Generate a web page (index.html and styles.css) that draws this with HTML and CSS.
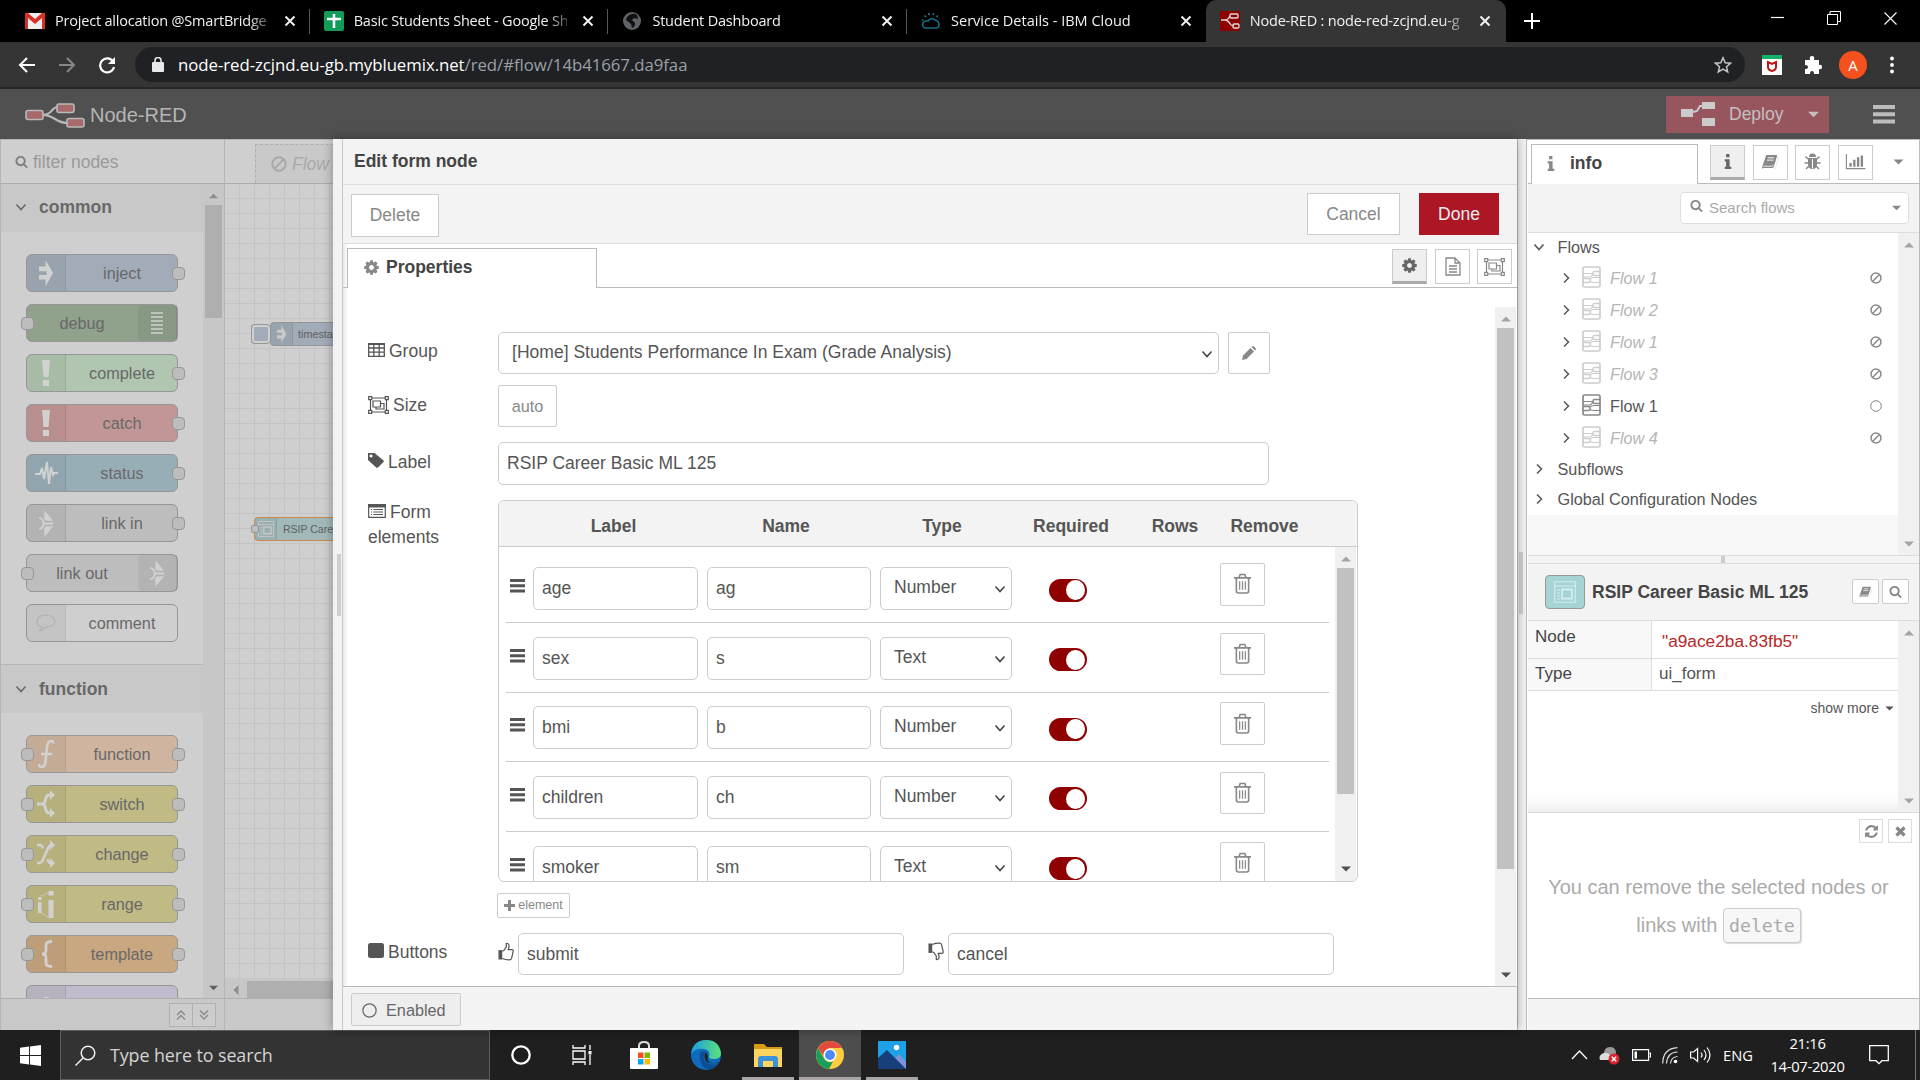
FILE: index.html
```html
<!DOCTYPE html>
<html lang="en">
<head>
<meta charset="utf-8">
<title>Node-RED : node-red-zcjnd.eu-gb.mybluemix.net</title>
<link rel="stylesheet" href="styles.css">
</head>
<body>
<svg class="defs" width="0" height="0">
  <symbol id="close" viewBox="0 0 12 12"><path d="M1.500 1.500l9 9M10.500 1.500l-9 9" stroke="currentColor" stroke-width="2" fill="none"/></symbol>
  <symbol id="cog" viewBox="0 0 1792 1792"><path fill="currentColor" d="M1152 896q0-106-75-181t-181-75-181 75-75 181 75 181 181 75 181-75 75-181zm512-109v222q0 12-8 23t-20 13l-185 28q-19 54-39 91 35 50 107 138 10 12 10 25t-9 23q-27 37-99 108t-94 71q-12 0-26-9l-138-108q-44 23-91 38-16 136-29 186-7 28-36 28h-222q-14 0-24.500-8.500t-11.500-21.500l-28-184q-49-16-90-37l-141 107q-10 9-25 9-14 0-25-11-126-114-165-168-7-10-7-23 0-12 8-23 15-21 51-66.500t54-70.500q-27-50-41-99l-183-27q-13-2-21-12.500t-8-23.500v-222q0-12 8-23t19-13l186-28q14-46 39-92-40-57-107-138-10-12-10-24 0-10 9-23 26-36 98.500-107.500t94.500-71.500q13 0 26 10l138 107q44-23 91-38 16-136 29-186 7-28 36-28h222q14 0 24.500 8.500t11.500 21.500l28 184q49 16 90 37l142-107q9-9 24-9 13 0 25 10 129 119 165 170 7 8 7 22 0 12-8 23-15 21-51 66.500t-54 70.500q26 50 41 98l183 28q13 2 21 12.500t8 23.500z"/></symbol>
  <symbol id="search" viewBox="0 0 1792 1792"><path fill="currentColor" d="M1216 832q0-185-131.500-316.500t-316.500-131.500-316.500 131.500-131.500 316.500 131.500 316.500 316.500 131.500 316.500-131.500 131.500-316.500zm512 832q0 52-38 90t-90 38q-54 0-90-38l-343-342q-179 124-399 124-143 0-273.500-55.500t-225-150-150-225-55.500-273.500 55.500-273.500 150-225 225-150 273.500-55.500 273.500 55.500 225 150 150 225 55.500 273.500q0 220-124 399l343 343q37 37 37 90z"/></symbol>
  <symbol id="refresh" viewBox="0 0 1792 1792"><path fill="currentColor" d="M1639 1056q0 5-1 7-64 268-268 434.500t-478 166.500q-146 0-282.500-55t-243.500-157l-129 129q-19 19-45 19t-45-19-19-45v-448q0-26 19-45t45-19h448q26 0 45 19t19 45-19 45l-137 137q71 66 161 102t187 36q134 0 250-65t186-179q11-17 53-117 8-23 30-23h192q13 0 22.500 9.500t9.500 22.500zm25-800v448q0 26-19 45t-45 19h-448q-26 0-45-19t-19-45 19-45l138-138q-148-137-349-137-134 0-250 65t-186 179q-11 17-53 117-8 23-30 23h-199q-13 0-22.500-9.500t-9.500-22.500v-7q65-268 270-434.500t480-166.500q146 0 284 55.500t245 156.500l130-129q19-19 45-19t45 19 19 45z"/></symbol>
  <symbol id="chev-d" viewBox="0 0 12 12"><path d="M1.500 3.500L6 8.500l4.500-5" stroke="currentColor" stroke-width="1.600" fill="none"/></symbol>
  <symbol id="chev-r" viewBox="0 0 12 12"><path d="M4 1.500L8.500 6 4 10.500" stroke="currentColor" stroke-width="1.500" fill="none"/></symbol>
  <symbol id="up" viewBox="0 0 10 6"><path fill="currentColor" d="M0 5.500h10L5 .5z"/></symbol>
  <symbol id="down" viewBox="0 0 10 6"><path fill="currentColor" d="M0 .5h10L5 5.500z"/></symbol>
  <symbol id="bars" viewBox="0 0 15 14"><path fill="currentColor" d="M0 0h15v3H0zM0 5.300h15v3H0zM0 10.600h15v3H0z"/></symbol>
  <symbol id="trash" viewBox="0 0 18 22"><g fill="none" stroke="currentColor" stroke-width="1.700"><path d="M0 5h18M5.500 4.500l1-3h5l1 3M2.500 5v14q0 2 2 2h9q2 0 2-2V5"/><path d="M6 8.500v9M9 8.500v9M12 8.500v9" stroke-width="1.300"/></g></symbol>
  <symbol id="group" viewBox="0 0 21 18"><g fill="none" stroke="currentColor"><path stroke-width="1.200" d="M2.500 2h16v14h-16zM5 5h7.500v6H5zM12.500 7.500H16V13H8v-2"/><g fill="#fff" stroke-width="1.200"><path d="M.7.700h3v3h-3zM17.300.7h3v3h-3zM.7 14.300h3v3h-3zM17.300 14.300h3v3h-3z"/></g></g></symbol>
  <symbol id="flow" viewBox="0 0 19 22"><g fill="none" stroke="currentColor"><rect x="1" y="1" width="17" height="20" rx="1.500" stroke-width="1.700"/><path stroke-width="1.100" d="M1 7.500h10M8 15.200q2 1.300 4 1.300h6M8 13.500q1-2 4-2h6M11 7.500q-1 3-3 3.500H1"/><path d="M18 5.500h-5.500q-1.500 0-1.500 2t1.500 2H18M1 12.500h5.500q1.500 0 1.500 2t-1.500 2H1" stroke-width="1.400"/></g></symbol>
  <symbol id="ban" viewBox="0 0 12 12"><g fill="none" stroke="currentColor" stroke-width="1.500"><circle cx="6" cy="6" r="5"/><path d="M2.500 9.500l7-7"/></g></symbol>
  <symbol id="ring" viewBox="0 0 12 12"><circle cx="6" cy="6" r="5.300" fill="none" stroke="currentColor" stroke-width="1"/></symbol>
  <symbol id="book" viewBox="0 0 18 17"><path fill="currentColor" d="M5 1h10.500q1.500 0 1 1.500L13 13.500q-.4 1.500-2 1.500H2q-1 0-.7 1H13q1.500 0 2-1.500L18 4.500q.2 0 0-.8L14.500 16H2Q0 16 .7 13.500z"/><path stroke="#fff" d="M6.500 4h7M5.800 6.500h7" stroke-width="1"/><path fill="none" stroke="#fff" d="M2 13h9q1 0 1.500-1.500" stroke-width=".9"/></symbol>
  <symbol id="bug" viewBox="0 0 17 18"><g fill="currentColor"><path d="M5 4a3.500 3.500 0 0 1 7 0zM4 5h9v6q0 5-4.500 5T4 11z"/></g><path fill="none" stroke="currentColor" stroke-width="1.500" d="M4 6L1.500 3.500M13 6l2.500-2.500M4 10H.5M13 10h3.500M5 13l-3 3M12 13l3 3"/><path stroke="#fff" stroke-width="1" d="M8.500 6v9.500"/></symbol>
  <symbol id="chart" viewBox="0 0 21 17"><path fill="none" stroke="currentColor" stroke-width="1.200" d="M.8 0v15.600H21"/><path fill="currentColor" d="M4 9.500h2.500v4H4zM8 6h2.500v7.500H8zM12 3.500h2.500v10H12zM16 1.500h2.500v12H16z"/></symbol>
  <symbol id="info" viewBox="0 0 8 16"><path fill="currentColor" d="M2 0h3.500v3.500H2zM.5 5.500h5.200v8H7.500V16H.5v-2.500H2V8H.5z"/></symbol>
  <symbol id="thumb" viewBox="0 0 17 20"><path fill="none" stroke="currentColor" stroke-width="1.300" stroke-linejoin="round" d="M4.500 9.500q2 0 3-2.500l1.300-2V1.500q2.700-.5 3 2.500 0 2-1 4h4q1.700.3 1.200 2.500l-1.500 6.500q-.5 2-2.500 2-4.500 0-7.500-1.500"/><path fill="currentColor" d="M.5 8.500h4v10h-4z"/></symbol>
  <symbol id="form" viewBox="0 0 22 22"><g fill="none" stroke="currentColor" stroke-width="1.100"><path d="M.7.700h20.600v20.600H.7zM.7 5h20.600"/><path stroke-width="1.800" d="M8 8.500h10v9H8z"/><path d="M3 9h3M3 12h3M3 15h3M3 18h3"/></g></symbol>
  <symbol id="arrow" viewBox="0 0 16 28"><path fill="currentColor" d="M0 7h7V0l8 14-8 14v-7H0v-5h8v-4H0z"/></symbol>
  <symbol id="link" viewBox="0 0 16 28"><path fill="currentColor" d="M6 0l9 11H9Q6 11 5.500 8zM6 28l9-11H9q-3 0-3.500 3z"/><path d="M0 8q5 1 5 6t-5 6M5 14h10" fill="none" stroke="currentColor" stroke-width="2"/></symbol>
  <symbol id="win" viewBox="0 0 22 22"><path fill="#fff" d="M0 3l9.500-1.300v8.800H0zM10.500 1.500L22 0v10.500H10.500zM0 11.500h9.500v8.800L0 19zM10.500 11.500H22V22l-11.500-1.500z"/></symbol>
</svg>

<header class="tabs">
  <div class="tab"><svg class="fav" viewBox="0 0 20 16"><path fill="#eee" d="M0 0h20v16H0z"/><path fill="#d93025" d="M0 0h3l7 6 7-6h3v16h-3V5l-7 6-7-6v11H0z"/></svg><span class="tt">Project allocation @SmartBridge</span><svg class="x"><use href="#close"/></svg></div>
  <div class="tab"><svg class="fav" viewBox="0 0 20 20"><rect width="20" height="20" rx="2" fill="#0f9d58"/><path stroke="#fff" stroke-width="2.500" d="M10 3v14M3 8h14"/></svg><span class="tt">Basic Students Sheet - Google Sh</span><svg class="x"><use href="#close"/></svg></div>
  <div class="tab"><svg class="fav" viewBox="0 0 20 20"><circle cx="10" cy="10" r="9" fill="#5f6368"/><path fill="#111" d="M10 3q6-1 6 5l-4-1-2 2 3 3q1 3-3 5l-1-4-5-4q1-5 6-6z"/></svg><span class="tt">Student Dashboard</span><svg class="x"><use href="#close"/></svg></div>
  <div class="tab"><svg class="fav" viewBox="0 0 20 20"><g fill="none" stroke-width="1.600"><path stroke="#176b87" d="M4 17q-3-1-2-5 2-3 5-2 3-4 7-1 4 1 4 5 0 3-3 3z"/><path stroke="#137a94" d="M5 6L3.500 4.500M8 4V2M12 4l.7-2M15.500 6L17 4.500M2.500 9H1"/></g></svg><span class="tt wide">Service Details - IBM Cloud</span><svg class="x"><use href="#close"/></svg></div>
  <div class="tab active"><svg class="fav" viewBox="0 0 20 20"><rect width="20" height="20" rx="1" fill="#8f0000"/><g fill="none" stroke="#ddd" stroke-width="1.300"><path d="M1 9h4q3 0 5-4M5 9q3 0 6 5l3 1"/><rect x="10" y="3" width="8" height="4" rx="1"/><rect x="13" y="13" width="6" height="4" rx="1"/></g></svg><span class="tt">Node-RED : node-red-zcjnd.eu-g</span><svg class="x"><use href="#close"/></svg></div>
  <svg class="plus" viewBox="0 0 16 16"><path d="M8 0v16M0 8h16" stroke="#fff" stroke-width="2"/></svg>
  <div class="winbtns">
    <svg width="13" height="14" viewBox="0 0 13 14"><path d="M0 6.500h13" stroke="#fff" stroke-width="1.200"/></svg>
    <svg width="14" height="14" viewBox="0 0 14 14"><path d="M.5 3.500h10v10H.5zM3 3.500v-3h10.500v10H11" stroke="#fff" fill="none"/></svg>
    <svg width="13" height="13" viewBox="0 0 13 13"><path d="M.5.500l12 12M12.500.500l-12 12" stroke="#fff" stroke-width="1.100"/></svg>
  </div>
</header>

<div class="toolbar">
  <svg class="nav" viewBox="0 0 18 18"><path d="M17 9H2M9 2L2 9l7 7" stroke="#fff" stroke-width="2" fill="none"/></svg>
  <svg class="nav" viewBox="0 0 18 18"><path d="M1 9h15M9 2l7 7-7 7" stroke="#85878a" stroke-width="2" fill="none"/></svg>
  <svg class="nav" viewBox="0 0 18 18"><path d="M15 5.500A7 7 0 1 0 16 11" stroke="#fff" stroke-width="2.200" fill="none"/><path d="M17 1v7h-7z" fill="#fff"/></svg>
  <div class="omni">
    <svg class="lock" viewBox="0 0 12 15"><rect y="5" width="12" height="10" rx="1" fill="#e8eaed"/><path d="M3 6V3.500a3 3 0 0 1 6 0V6" stroke="#e8eaed" stroke-width="1.600" fill="none"/></svg>
    <span class="url"><b>node-red-zcjnd.eu-gb.mybluemix.net</b>/red/#flow/14b41667.da9faa</span>
    <svg class="star" viewBox="0 0 18 18"><path d="M9 1.800l2.200 4.900 5.300.5-4 3.500 1.200 5.200L9 13.100l-4.700 2.800 1.200-5.200-4-3.500 5.300-.5z" stroke="#c4c7c5" stroke-width="1.500" fill="none"/></svg>
  </div>
  <svg class="ext" viewBox="0 0 20 20"><rect width="20" height="20" fill="#fff"/><rect width="20" height="4" fill="#13b36a"/><path d="M6 7v5q0 3 4 4 4-1 4-4V7l-4 2z" stroke="#c01818" stroke-width="2" fill="none"/></svg>
  <svg class="ext puzzle" viewBox="0 0 20 20"><path fill="#fff" d="M2 5h5q-1-4 2-4t2 4h5v5q3-1 3 2t-3 2v5h-5q0-3-2-3t-2 3H2v-5q3 0 3-2t-3-2z"/></svg>
  <span class="avatar">A</span>
  <svg class="dots" viewBox="0 0 4 18"><circle cx="2" cy="2.500" r="1.900" fill="#fff"/><circle cx="2" cy="9" r="1.900" fill="#fff"/><circle cx="2" cy="15.500" r="1.900" fill="#fff"/></svg>
</div>

<div class="redhead">
  <svg class="logo" viewBox="0 0 60 25"><path d="M17 12c12 0 8-8 16-8M17 12c14 0 12 8 26 8" stroke="#b9b9b9" stroke-width="2.200" fill="none"/><g fill="#a76a6a" stroke="#b9b9b9" stroke-width="1.600"><rect x="1" y="7.500" width="17" height="9" rx="2"/><rect x="32" y="1" width="17" height="8.500" rx="2"/><rect x="42" y="15.500" width="17" height="8.500" rx="2"/></g></svg>
  <span class="brand">Node-RED</span>
  <div class="deploy"><svg width="34" height="24" viewBox="0 0 34 24"><path fill="#cbcbcb" d="M0 7h12v8H0zM21 0h13v7H21zM21 16h13v8H21z"/><path d="M12 10l4-1 3-5h3" stroke="#cbcbcb" stroke-width="2" fill="none"/></svg><span>Deploy</span><svg class="dcaret"><use href="#down"/></svg></div>
  <svg class="menu" viewBox="0 0 22 19"><path fill="#bcbcbc" d="M0 0h22v4H0zM0 7.200h22v4H0zM0 14.400h22v4H0z"/></svg>
</div>

<main class="work">
  <aside class="palette">
    <div class="pfilter"><svg width="13" height="13"><use href="#search"/></svg><span>filter nodes</span></div>
    <div class="pbody">
      <div class="plist">
        <h3><svg width="12" height="12"><use href="#chev-d"/></svg>common</h3>
        <div class="nodes">
          <div class="node inject"><i><svg width="15" height="28"><use href="#arrow"/></svg></i><span>inject</span><b class="port r"></b></div>
          <div class="node debug rev"><i><svg width="12" height="22" viewBox="0 0 12 22"><path stroke="currentColor" stroke-width="1.500" d="M0 1h12M0 5h12M0 9h12M0 13h12M0 17h12M0 21h12"/></svg></i><span>debug</span><b class="port l"></b></div>
          <div class="node complete"><i><svg width="8" height="26" viewBox="0 0 8 26"><path fill="currentColor" d="M0 0h8L6.500 17h-5zM1 20h6v6H1z"/></svg></i><span>complete</span><b class="port r"></b></div>
          <div class="node catch"><i><svg width="8" height="26" viewBox="0 0 8 26"><path fill="currentColor" d="M0 0h8L6.500 17h-5zM1 20h6v6H1z"/></svg></i><span>catch</span><b class="port r"></b></div>
          <div class="node status"><i><svg width="23" height="28" viewBox="0 0 23 28"><path fill="none" stroke="currentColor" stroke-width="2" d="M0 15h5l2-6 2 11L12 3l2 22 2-17 2 8 1-2h4"/></svg></i><span>status</span><b class="port r"></b></div>
          <div class="node link"><i><svg width="15" height="27"><use href="#link"/></svg></i><span>link in</span><b class="port r"></b></div>
          <div class="node link rev"><i><svg width="15" height="27"><use href="#link"/></svg></i><span>link out</span><b class="port l"></b></div>
          <div class="node comment"><i><svg width="20" height="18" viewBox="0 0 20 18"><path fill="none" stroke="#b4b4b4" stroke-width="1.400" d="M6 13Q1 12 1 7.500 2 1 10 1t9 6q-1 6-9 6-3 3-7 4 3-2 3-4z"/></svg></i><span>comment</span></div>
        </div>
        <h3 class="second"><svg width="12" height="12"><use href="#chev-d"/></svg>function</h3>
        <div class="nodes">
          <div class="node function"><i><svg width="16" height="28" viewBox="0 0 16 28"><path fill="none" stroke="currentColor" stroke-width="2.600" d="M16 4q0-3-3-3-3 0-4 6L7.500 21q-.5 6-4 6Q1 27 1 24M3 14h11"/></svg></i><span>function</span><b class="port l"></b><b class="port r"></b></div>
          <div class="node yellow"><i><svg width="18" height="28" viewBox="0 0 18 28"><path fill="none" stroke="currentColor" stroke-width="3" d="M0 14h6.500M15 5h-3q-2.500 0-3.500 4.500T6.500 14q1 0 2 4.500T12 23h3"/><path fill="currentColor" d="M13 0l5 5-5 5zM13 18l5 5-5 5z"/></svg></i><span>switch</span><b class="port l"></b><b class="port r"></b></div>
          <div class="node yellow"><i><svg width="18" height="28" viewBox="0 0 18 28"><path fill="none" stroke="currentColor" stroke-width="2.600" d="M0 5h3q2 0 3 3.500M10.500 19q1 4 3 4H15M0 23h2q3 0 4-3.500l5-11Q12 5 15 5"/><path fill="currentColor" d="M13 0l5 5-5 5zM13 18l5 5-5 5z"/></svg></i><span>change</span><b class="port l"></b><b class="port r"></b></div>
          <div class="node yellow"><i><svg width="16" height="27" viewBox="0 0 16 27"><path fill="currentColor" d="M0 6h3.500v3H0zM0 11h3.500v11H0zM10.500 0h5v4.500h-5zM10.500 9h5v18h-5z"/><path stroke="currentColor" stroke-dasharray="2 1" d="M3 5l7-3M3 22l7 4"/></svg></i><span>range</span><b class="port l"></b><b class="port r"></b></div>
          <div class="node template"><i><svg width="12" height="28" viewBox="0 0 12 28"><path fill="none" stroke="currentColor" stroke-width="2.800" d="M12 1.500Q6 1.500 6 5v5q0 4-4 4 4 0 4 4v5q0 3.500 6 3.500"/></svg></i><span>template</span><b class="port l"></b><b class="port r"></b></div>
          <div class="node delay"><i><svg width="22" height="22" viewBox="0 0 22 22"><circle cx="11" cy="14" r="9" fill="none" stroke="currentColor" stroke-width="2.500" stroke-dasharray="5 3"/></svg></i><span></span></div>
        </div>
      </div>
      <div class="psb"><svg><use href="#up"/></svg><div class="pthumb"></div><svg class="dn"><use href="#down"/></svg></div>
    </div>
    <div class="pfoot"><div class="pbtn"><svg width="10" height="10" viewBox="0 0 10 10"><path d="M1 5l4-4 4 4M1 9.500l4-4 4 4"/></svg></div><div class="pbtn"><svg width="10" height="10" viewBox="0 0 10 10"><path d="M1 .5l4 4 4-4M1 5l4 4 4-4"/></svg></div></div>
  </aside>

  <section class="canvas">
    <div class="ctabs"><div class="ctab"><svg width="16" height="16"><use href="#ban"/></svg><span>Flow 1</span></div></div>
    <div class="grid">
      <div class="cnode c1"><i><svg width="10" height="18"><use href="#arrow"/></svg></i>timestamp</div><div class="trig"></div>
      <div class="cnode c2"><i><svg width="16" height="16"><use href="#form"/></svg></i>RSIP Career</div><div class="cport"></div>
    </div>
    <div class="hsb"><svg viewBox="0 0 6 10"><path fill="#8d8d8d" d="M5.500 0v10L.5 5z"/></svg><div></div></div>
    <div class="cfoot"></div>
  </section>

  <section class="tray">
    <div class="trayedge"><div class="grip"></div></div>
    <div class="traymain">
      <div class="thead">Edit form node</div>
      <div class="tbar"><span class="btn del">Delete</span><span class="btn cancel">Cancel</span><span class="btn done">Done</span></div>
      <div class="ttabs"><div class="edge"></div><div class="ptab"><svg width="17" height="17"><use href="#cog"/></svg>Properties</div>
        <div class="ticons"><span class="ib on"><svg width="17" height="17"><use href="#cog"/></svg></span><span class="ib"><svg width="16" height="19" viewBox="0 0 16 19"><path d="M1 1h9l5 5v12H1zM10 1v5h5M4 9h8M4 12h8M4 15h8" fill="none" stroke="currentColor" stroke-width="1.300"/></svg></span><span class="ib"><svg width="21" height="18"><use href="#group"/></svg></span></div></div>
      <div class="tbody">
        <div class="form">
          <div class="frow f1"><label><svg width="17" height="14" viewBox="0 0 17 14"><path d="M.7.700h15.600v12.600H.7zM.7 5h15.600M.7 9.200h15.600M5.800 1v12M11.200 1v12" fill="none" stroke="currentColor" stroke-width="1.300"/><path d="M0 0h17v2H0z" fill="currentColor"/></svg>Group</label><div class="inp gsel">[Home] Students Performance In Exam (Grade Analysis)<svg width="12" height="12"><use href="#chev-d"/></svg></div><span class="btn pencil"><svg width="14" height="14" viewBox="0 0 14 14"><path fill="currentColor" d="M0 14l1-4.500 7.500-7.500L12 5.500 4.500 13zM9.500 1q1.300-1.500 2.500-.5l1.500 1.500q1 1-.5 2.500z"/></svg></span></div>
          <div class="frow f2"><label><svg width="21" height="18"><use href="#group"/></svg>Size</label><span class="btn auto">auto</span></div>
          <div class="frow f3"><label><svg width="16" height="15" viewBox="0 0 16 15"><path fill="currentColor" fill-rule="evenodd" d="M0 0h6.500l9 7.500q.7.700 0 1.500L10 14.500q-1 .7-1.800 0L0 7zM3 1.500a1.500 1.500 0 1 0 .1 0z"/></svg>Label</label><div class="inp lab">RSIP Career Basic ML 125</div></div>
          <div class="frow f4"><label><svg width="18" height="14" viewBox="0 0 18 14"><path d="M.7.700h16.600v12.600H.7zM5.500 5.500H15M5.500 8H15M5.500 10.500H15M3 5.500h1.200M3 8h1.200M3 10.500h1.200" fill="none" stroke="currentColor" stroke-width="1.200"/><path d="M0 0h18v3.500H0z" fill="currentColor"/></svg>Form<br>elements</label>
            <div class="list">
              <div class="lhead"><span class="h1">Label</span><span class="h2">Name</span><span class="h3">Type</span><span class="h4">Required</span><span class="h5">Rows</span><span class="h6">Remove</span></div>
              <div class="lbody"><div class="rows">
                <div class="row"><svg class="drag"><use href="#bars"/></svg><div class="inp a">age</div><div class="inp n">ag</div><div class="inp t">Number<svg width="12" height="12"><use href="#chev-d"/></svg></div><div class="tog"></div><span class="btn rm"><svg><use href="#trash"/></svg></span></div>
                <div class="row"><svg class="drag"><use href="#bars"/></svg><div class="inp a">sex</div><div class="inp n">s</div><div class="inp t">Text<svg width="12" height="12"><use href="#chev-d"/></svg></div><div class="tog"></div><span class="btn rm"><svg><use href="#trash"/></svg></span></div>
                <div class="row"><svg class="drag"><use href="#bars"/></svg><div class="inp a">bmi</div><div class="inp n">b</div><div class="inp t">Number<svg width="12" height="12"><use href="#chev-d"/></svg></div><div class="tog"></div><span class="btn rm"><svg><use href="#trash"/></svg></span></div>
                <div class="row"><svg class="drag"><use href="#bars"/></svg><div class="inp a">children</div><div class="inp n">ch</div><div class="inp t">Number<svg width="12" height="12"><use href="#chev-d"/></svg></div><div class="tog"></div><span class="btn rm"><svg><use href="#trash"/></svg></span></div>
                <div class="row"><svg class="drag"><use href="#bars"/></svg><div class="inp a">smoker</div><div class="inp n">sm</div><div class="inp t">Text<svg width="12" height="12"><use href="#chev-d"/></svg></div><div class="tog"></div><span class="btn rm"><svg><use href="#trash"/></svg></span></div>
              </div><div class="sb lsb"><svg><use href="#up"/></svg><div></div><svg class="dn"><use href="#down"/></svg></div></div>
            </div></div>
          <div class="frow f5"><span class="btn add"><svg width="11" height="11" viewBox="0 0 11 11"><path d="M5.500 0v11M0 5.500h11" stroke="currentColor" stroke-width="3"/></svg>element</span></div>
          <div class="frow f6"><label><svg width="16" height="15" viewBox="0 0 16 15"><rect width="16" height="15" rx="2.500" fill="currentColor"/></svg>Buttons</label><svg class="th"><use href="#thumb"/></svg><div class="inp bt">submit</div><svg class="th flip"><use href="#thumb"/></svg><div class="inp bt">cancel</div></div>
        </div>
        <div class="sb tsb"><svg><use href="#up"/></svg><div></div><svg class="dn"><use href="#down"/></svg></div>
      </div>
      <div class="tfoot"><span class="btn en"><svg width="15" height="15"><use href="#ring"/></svg>Enabled</span></div>
    </div>
  </section>
  <div class="split"><div class="grip"></div></div>

  <aside class="side">
    <div class="stabs"><div class="edge"></div><div class="stab"><svg width="8" height="15"><use href="#info"/></svg>info</div>
      <span class="ib on"><svg width="8" height="15"><use href="#info"/></svg></span><span class="ib"><svg width="18" height="16"><use href="#book"/></svg></span><span class="ib"><svg width="17" height="18"><use href="#bug"/></svg></span><span class="ib"><svg width="21" height="16"><use href="#chart"/></svg></span><svg class="scaret"><use href="#down"/></svg></div>
    <div class="ssearch"><div class="sbox"><svg width="13" height="13"><use href="#search"/></svg><span>Search flows</span><svg class="sc"><use href="#down"/></svg></div></div>
    <div class="stree"><div class="tree">
      <div class="titems">
      <div class="ti top open"><svg class="cv"><use href="#chev-d"/></svg>Flows</div>
      <div class="ti fl off"><svg class="cv"><use href="#chev-r"/></svg><svg class="fi"><use href="#flow"/></svg><span>Flow 1</span><svg class="st"><use href="#ban"/></svg></div>
      <div class="ti fl off"><svg class="cv"><use href="#chev-r"/></svg><svg class="fi"><use href="#flow"/></svg><span>Flow 2</span><svg class="st"><use href="#ban"/></svg></div>
      <div class="ti fl off"><svg class="cv"><use href="#chev-r"/></svg><svg class="fi"><use href="#flow"/></svg><span>Flow 1</span><svg class="st"><use href="#ban"/></svg></div>
      <div class="ti fl off"><svg class="cv"><use href="#chev-r"/></svg><svg class="fi"><use href="#flow"/></svg><span>Flow 3</span><svg class="st"><use href="#ban"/></svg></div>
      <div class="ti fl"><svg class="cv"><use href="#chev-r"/></svg><svg class="fi"><use href="#flow"/></svg><span>Flow 1</span><svg class="st"><use href="#ring"/></svg></div>
      <div class="ti fl off"><svg class="cv"><use href="#chev-r"/></svg><svg class="fi"><use href="#flow"/></svg><span>Flow 4</span><svg class="st"><use href="#ban"/></svg></div>
      <div class="ti top"><svg class="cv"><use href="#chev-r"/></svg>Subflows</div>
      <div class="ti top"><svg class="cv"><use href="#chev-r"/></svg>Global Configuration Nodes</div>
      </div></div>
      <div class="sb off"><svg><use href="#up"/></svg><svg class="dn"><use href="#down"/></svg></div></div>
    <div class="hsplit"><div></div></div>
    <div class="nhead"><span class="nicon"><svg width="22" height="22"><use href="#form"/></svg></span><span class="ntitle">RSIP Career Basic ML 125</span><span class="nb"><svg width="13" height="12"><use href="#book"/></svg></span><span class="nb"><svg width="13" height="13"><use href="#search"/></svg></span></div>
    <div class="nbody"><div class="ntab">
      <div class="nr"><span>Node</span><em class="id">"a9ace2ba.83fb5"</em></div>
      <div class="nr r2"><span>Type</span><em>ui_form</em></div>
      <div class="more">show more<svg><use href="#down"/></svg></div></div>
      <div class="sb off"><svg><use href="#up"/></svg><svg class="dn"><use href="#down"/></svg></div></div>
    <div class="tips"><div class="tipbtns"><span><svg width="15" height="15"><use href="#refresh"/></svg></span><span><svg width="11" height="11" viewBox="0 0 11 11"><path d="M1.500 1.500l8 8M9.500 1.500l-8 8" stroke="currentColor" stroke-width="3.200"/></svg></span></div>
      <p>You can remove the selected nodes or<br>links with <kbd>delete</kbd></p></div>
    <div class="sfoot"></div>
  </aside>
</main>

<footer class="task">
  <div class="start"><svg width="21" height="21"><use href="#win"/></svg></div>
  <div class="tsearch"><svg width="21" height="21" viewBox="0 0 21 21"><circle cx="13" cy="8" r="6.800" fill="none" stroke="#eee" stroke-width="1.500"/><path d="M8 13l-7.500 7.500" stroke="#eee" stroke-width="1.500"/></svg><span>Type here to search</span></div>
  <div class="app first"><svg width="20" height="20" viewBox="0 0 20 20"><circle cx="10" cy="10" r="8.700" fill="none" stroke="#fff" stroke-width="2.300"/></svg></div>
  <div class="app"><svg width="21" height="20" viewBox="0 0 21 20"><path d="M1 0v3h12V0M1 20v-3h12v3M1 6h12v8H1zM18 0v5M18 10v10" fill="none" stroke="#fff" stroke-width="1.300"/><path fill="#fff" d="M16.500 6h3v3.500h-3z"/></svg></div>
  <div class="app"><svg width="30" height="30" viewBox="0 0 30 30"><path d="M10 10V6q0-4 5-4t5 4v4" fill="none" stroke="#ddd" stroke-width="2"/><rect x="1" y="8" width="28" height="21" rx="1" fill="#fff"/><path fill="#f25022" d="M9 12.500h5.500V18H9z"/><path fill="#7fba00" d="M15.500 12.500H21V18h-5.500z"/><path fill="#00a4ef" d="M9 19h5.500v5.500H9z"/><path fill="#ffb900" d="M15.500 19H21v5.500h-5.500z"/></svg></div>
  <div class="app"><svg width="30" height="30" viewBox="0 0 30 30"><defs><linearGradient id="eg"><stop offset="0" stop-color="#1b9de2"/><stop offset="1" stop-color="#5ce07c"/></linearGradient></defs><circle cx="15" cy="15" r="15" fill="#0f6cbd"/><path fill="url(#eg)" d="M0 14Q2 0 15 0t15 13q0 6-7 6-5 0-5-2 2-7-5-8Q4 8 0 14z"/><path fill="#222" d="M15 12q-3 4 0 9 4 4 13 1-2 2-6 1-7 0-5-7z"/><path fill="#0c4f94" d="M9 13q-2 12 8 17 7-1 11-7-8 4-14-2-3-4 1-9-4-2-6 1z"/></svg></div>
  <div class="app"><svg width="28" height="25" viewBox="0 0 28 25"><path fill="#d79a12" d="M0 1h10l3 3h15v5H0z"/><path fill="#fcd462" d="M0 6h28v18H0z"/><path fill="#3c91d8" d="M4 24V16q0-3 3-3h14q3 0 3 3v8h-5v-6H9v6z"/></svg><u></u></div>
  <div class="app chrome"><svg width="28" height="28" viewBox="0 0 28 28"><circle cx="14" cy="14" r="14" fill="#ffcd40"/><path fill="#e04a3f" d="M2 7a14 14 0 0 1 24.200 0H14a7 7 0 0 0-6 9z"/><path fill="#17a05d" d="M2 7l6 10.500a7 7 0 0 0 9 3L13 28A14 14 0 0 1 2 7z"/><circle cx="14" cy="14" r="6.500" fill="#fff"/><circle cx="14" cy="14" r="5" fill="#4c8bf5"/></svg><u></u></div>
  <div class="app"><svg width="28" height="28" viewBox="0 0 28 28"><rect width="28" height="28" fill="#1da2e8"/><path fill="#7f93d8" d="M15 19l6-6 7 8v7H15z"/><path fill="#173f7c" d="M0 17l9-8 19 19H0z"/><circle cx="18.500" cy="6.500" r="2.700" fill="#fff"/></svg><u></u></div>
  <div class="systray">
    <svg width="17" height="10" viewBox="0 0 17 10"><path d="M1 9l7.500-8L16 9" stroke="#fff" stroke-width="1.300" fill="none"/></svg>
    <svg width="21" height="19" viewBox="0 0 21 19"><path fill="#999" d="M5 8q0-7 6-7 5 0 6 5l-1 7H8z"/><path fill="#ddd" d="M1 14q-2-5 4-7 4-1 7 3v4z"/><circle cx="15" cy="13" r="5.500" fill="#d9232e"/><path d="M12.800 10.800l4.400 4.400M17.200 10.800l-4.400 4.400" stroke="#fff" stroke-width="1.500"/></svg>
    <svg width="19" height="12" viewBox="0 0 19 12"><path d="M.6.600h16v10.800H.6zM17.500 4h1v4h-1" stroke="#fff" stroke-width="1.200" fill="none"/><path d="M2.500 2.500h2.500v7H2.500z" fill="#fff"/></svg>
    <svg width="16" height="17" viewBox="0 0 16 17"><path d="M.7 16.500Q1 1.500 15.500.7M4.500 16.500Q5 5.500 15.500 5M8.500 16.500Q9 10 15.500 9.500" stroke="#ddd" stroke-width="1.200" fill="none"/><circle cx="13.500" cy="14.500" r="1.800" fill="#fff"/></svg>
    <svg width="21" height="18" viewBox="0 0 21 18"><path d="M.6 6h3l4-3.500v13L3.600 12h-3zM11 6.500q2 2.500 0 5M14 4q4 5 0 10M17 1.500q6 7.500 0 15" stroke="#fff" stroke-width="1.200" fill="none"/></svg>
    <span class="eng">ENG</span>
    <span class="clock">21:16<br>14-07-2020</span>
    <svg class="note" width="20" height="20" viewBox="0 0 20 20"><path d="M.7.700h18.600v15H13l-3 3-3-3H.7z" stroke="#fff" stroke-width="1.300" fill="none"/></svg>
  </div>
</footer>
</body>
</html>
```
FILE: styles.css
```css
* { box-sizing: border-box; }
body { margin: 0; width: 1920px; height: 1080px; overflow: hidden; background: #000; color: #555; font: 17.5px "Liberation Sans", Arial, sans-serif; display: flex; flex-direction: column; }
svg { display: block; flex: none; }
.defs { position: absolute; }
b, em, i, u { font-weight: normal; font-style: normal; text-decoration: none; }

/* browser tabs */
.tabs { height: 42px; flex: none; background: #000; display: flex; align-items: center; padding-left: 11px; font-family: "Open Sans", sans-serif; font-size: 14.5px; color: #f1f1f1; }
.tab { width: 298.700px; height: 42px; display: flex; align-items: center; padding: 0 14px 0 14px; position: relative; }
.tab:not(.active):not(:nth-child(4))::after { content: ""; position: absolute; right: 0; top: 9px; height: 25px; width: 1px; background: #55585c; }
.tab.active { background: #353535; border-radius: 10px 10px 0 0; width: 300px; padding-right: 15px; }
.fav { width: 20px; height: 20px; margin-right: 10px; }
.tt { flex: 1; overflow: hidden; white-space: nowrap; letter-spacing: -.2px; padding-bottom: 2px; mask-image: linear-gradient(90deg, #000 90%, rgba(0,0,0,.3) 100%); }
.tt.wide { letter-spacing: 0; }
.x { width: 12px; height: 12px; margin-left: 15px; }
.plus { width: 16px; height: 16px; margin-left: 18px; }
.winbtns { margin-left: auto; display: flex; gap: 43px; padding: 0 23px 6px 0; align-items: center; }

.toolbar { height: 47px; flex: none; background: #353535; border-bottom: 2px solid #262626; display: flex; align-items: center; padding-left: 18px; }
.nav { width: 18px; height: 18px; margin-right: 22px; }
.omni { width: 1610px; height: 35px; margin-left: -3px; border-radius: 18px; background: #202124; display: flex; align-items: center; padding: 0 13px 0 17px; }
.lock { width: 12px; height: 15px; }
.url { flex: 1; margin-left: 14px; padding-bottom: 1px; font: 16.800px "Open Sans", sans-serif; letter-spacing: -.05px; color: #9aa0a6; white-space: nowrap; }
.url b { color: #fff; }
.star { width: 18px; height: 18px; }
.ext { width: 20px; height: 20px; margin-left: 17px; }
.puzzle { margin-left: 21px; }
.avatar { width: 28px; height: 28px; border-radius: 50%; background: #f4511e; color: #fff; font: 15px/28px "Open Sans", sans-serif; text-align: center; margin-left: 16px; }
.dots { width: 4px; height: 18px; margin-left: 23px; }

.redhead { height: 50px; flex: none; background: #505050; display: flex; align-items: center; padding: 0 25px; }
.logo { width: 60px; height: 25px; margin-top: 3px; }
.brand { margin-left: 5px; padding-top: 3px; font-size: 20px; color: #b5b5b5; }
.deploy { margin-left: auto; width: 163px; height: 37px; background: #97555e; display: flex; align-items: center; padding-left: 15px; color: #c6bfc0; }
.deploy span { margin: 0 25px 0 14px; }
.dcaret { width: 11px; height: 7px; }
.menu { width: 22px; height: 19px; margin-left: 44px; }

/* editor */
.work { height: 891px; flex: none; display: flex; background: #f2f2f2; }
.palette { width: 225px; display: flex; flex-direction: column; background: #cfcfcf; border: solid #b5b5b5; border-width: 1px 1px 0; }
.pfilter { height: 44px; flex: none; border-bottom: 1px solid #ababab; display: flex; align-items: center; gap: 5px; padding-left: 14px; color: #9a9a9a; }
.pfilter span { padding-top: 1px; }
.pfilter svg { color: #7f7f7f; }
.pbody { height: 814px; display: flex; overflow: hidden; }
.plist { width: 202px; }
.plist h3 { margin: 0; height: 48px; background: #c8c8c8; display: flex; align-items: center; gap: 12px; padding: 0 0 2px 14px; font-size: 17.500px; color: #686868; }
.plist .second { height: 49px; border-top: 1px solid #b5b5b5; padding-bottom: 0; }
.nodes { padding: 22px 0 22px 25px; display: flex; flex-direction: column; gap: 12px; }
.node { position: relative; width: 152px; height: 38px; border: 1px solid #969696; border-radius: 6px; display: flex; align-items: center; font-size: 16.250px; color: #686868; }
.node i { width: 39px; height: 36px; background: rgba(0,0,0,.05); border-right: 1px solid rgba(0,0,0,.07); border-radius: 5px 0 0 5px; display: flex; align-items: center; justify-content: center; color: #d1d1d1; }
.node span { flex: 1; text-align: center; padding-left: 1px; }
.rev { flex-direction: row-reverse; }
.rev span { padding: 0 1px 0 0; }
.port { position: absolute; top: 12px; width: 13px; height: 13px; border: 1px solid #969696; background: #bdbdbd; border-radius: 4px; }
.port.r { right: -8px; }
.port.l { left: -6px; }
.inject { background: #a2acb8; } .debug { background: #90a18c; } .complete { background: #b0c6b0; }
.catch { background: #c29696; } .status { background: #98aeb7; } .link { background: #bdbdbd; }
.function { background: #cfb59f; } .yellow { background: #c0ba84; } .template { background: #c9a780; } .delay { background: #c0bccb; }
.psb { width: 21px; background: #c7c7c7; display: flex; flex-direction: column; align-items: center; padding: 9px 0; color: #8d8d8d; }
.psb svg { width: 9px; height: 6px; }
.pthumb { width: 17px; height: 113px; margin-top: 6px; background: #afafaf; }
.psb .dn { margin-top: auto; margin-bottom: -2px; color: #5d5d5d; }
.pfoot { height: 32px; flex: none; border-top: 1px solid #b0b0b0; background: #c8c8c8; display: flex; justify-content: flex-end; padding: 4px 8px 0 0; }
.pbtn { width: 24px; height: 24px; border: 1px solid #b0b0b0; background: #cdcdcd; display: flex; align-items: center; justify-content: center; margin-left: -1px; }
.pbtn path { fill: none; stroke: #888; stroke-width: 1.300; }

.canvas { width: 107.500px; display: flex; flex-direction: column; overflow: hidden; background: #cfcfcf; border-top: 1px solid #b5b5b5; }
.ctabs { height: 44px; border-bottom: 1px solid #ababab; padding: 4px 0 0 30px; }
.ctab { height: 39px; width: 200px; border: 1px dashed #b0b0b0; border-bottom: 0; background: #c9c9c9; display: flex; align-items: center; gap: 5px; padding-left: 15px; font-style: italic; color: #a9a9a9; }
.grid { position: relative; height: 794px; background: linear-gradient(90deg, transparent 14px, #c4c4c4 14px) 0 0/15px 15px, linear-gradient(transparent 14px, #c4c4c4 14px) 0 0/15px 15px; }
.cnode { position: absolute; height: 24px; width: 120px; border: 1px solid #969696; border-radius: 4px; display: flex; align-items: center; gap: 5px; white-space: nowrap; font-size: 10.800px; color: #5f5f5f; }
.cnode i { width: 22px; height: 22px; background: rgba(0,0,0,.05); border-right: 1px solid rgba(0,0,0,.07); display: flex; align-items: center; justify-content: center; color: #c9c9c9; }
.c1 { left: 45px; top: 138px; background: #a2acb8; }
.trig { position: absolute; left: 26px; top: 140px; width: 19px; height: 20px; border: 1px solid #969696; border-right: 0; border-radius: 4px; background: #a2acb8; box-shadow: inset 0 0 0 2px #cfcfcf; }
.c2 { left: 29px; top: 333px; background: #a2b9ba; border: 1.500px solid #c88a4f; font-size: 10.500px; gap: 6px; }
.cport { position: absolute; left: 26px; top: 341px; width: 8px; height: 8px; border: 1px solid #969696; border-radius: 2px; background: #bdbdbd; }
.hsb { height: 20px; background: #c7c7c7; display: flex; align-items: center; padding: 3px 0 0 8px; gap: 8px; }
.hsb svg { width: 6px; height: 10px; }
.hsb div { flex: 1; height: 17px; background: #afafaf; }
.cfoot { flex: 1; border-top: 1px solid #b0b0b0; background: #c8c8c8; }

/* edit tray */
.tray { width: 1184.500px; display: flex; z-index: 1; box-shadow: 0 0 10px rgba(0,0,0,.35); }
.trayedge { width: 10.500px; background: #f2f2f2; border-right: 1px solid #c9c9c9; padding: 415px 0 0 4px; }
.grip { width: 4px; height: 62px; background: #cfcfcf; }
.traymain { width: 1174px; display: flex; flex-direction: column; background: #fff; box-shadow: inset 6px 0 6px -6px rgba(0,0,0,.2); }
.thead { height: 46px; background: #f3f3f3; border-bottom: 1px solid #ddd; font-weight: bold; color: #444; line-height: 44px; padding-left: 11px; }
.tbar { height: 59px; background: #f3f3f3; border-bottom: 1px solid #ddd; display: flex; align-items: flex-start; padding: 8px 18px 0 8px; }
.btn { border: 1px solid #ccc; background: #fff; color: #888; display: flex; align-items: center; justify-content: center; }
.del { width: 88px; height: 43px; margin: 1px auto 0 0; }
.cancel { width: 93px; height: 42px; margin-right: 19px; }
.done { width: 80px; height: 42px; background: #ad1625; border-color: #ad1625; color: #eee; }
.ttabs { height: 44px; display: flex; align-items: flex-end; }
.edge { width: 4px; border-bottom: 1px solid #bbb; }
.ptab { width: 250px; height: 40px; border: 1px solid #bbb; border-bottom: 0; display: flex; align-items: center; gap: 6px; padding: 0 0 2px 15px; font-weight: bold; color: #444; }
.ptab svg { color: #888; margin-bottom: 1px; }
.ticons { flex: 1; height: 44px; border-bottom: 1px solid #bbb; display: flex; justify-content: flex-end; padding: 5px 5px 0 0; gap: 7px; }
.ib { width: 35px; height: 35px; border: 1px solid #ccc; background: #fff; display: flex; align-items: center; justify-content: center; color: #888; }
.ib.on { background: #efefef; border-bottom: 3px solid #aaa; color: #666; }
.ticons .ib.on { margin-right: 1px; }
.tbody { height: 698px; padding: 19px 1px 0 0; display: flex; justify-content: space-between; }
.form { padding: 25px 0 0 25px; }
.frow { display: flex; align-items: flex-start; }
label { width: 130px; flex: none; color: #555; line-height: 25px; padding-top: 7px; }
label svg { display: inline-block; vertical-align: 0; margin-right: 4px; }
.f2 label { padding-top: 8px; }
.f2 label svg { vertical-align: -3px; }
.f3 label { padding-top: 8px; }
.inp { height: 43px; border: 1px solid #ccc; border-radius: 5px; background: #fff; line-height: 40px; padding-left: 8px; white-space: nowrap; position: relative; color: #555; }
.inp svg { position: absolute; right: 5px; top: 15px; color: #444; }
.gsel { width: 721px; padding-left: 13px; line-height: 38px; height: 42px; margin-bottom: 1px; letter-spacing: .02px; }
.pencil { width: 42px; height: 42px; margin-left: 9px; border-radius: 2px; }
.f2 { margin-top: 10px; }
.auto { width: 59px; height: 42px; border-radius: 2px; font-size: 16.250px; }
.f3 { margin-top: 15px; }
.lab { width: 771px; line-height: 41px; }
.f4 { margin-top: 15px; }
.f4 label { padding-top: 0; }
.list { width: 860px; height: 382px; border: 1px solid #ccc; border-radius: 6px; overflow: hidden; }
.lhead { height: 46px; background: #f3f3f3; border-bottom: 1px solid #ccc; display: flex; font-weight: bold; line-height: 50px; text-align: center; padding-left: 32px; }
.h1 { width: 165px; } .h2 { width: 180px; } .h3 { width: 132px; } .h4 { width: 126px; } .h5 { width: 82px; } .h6 { width: 97px; }
.lbody { height: 334px; display: flex; justify-content: space-between; padding-right: 1px; }
.rows { width: 830px; height: 334px; overflow: hidden; padding: 6.500px 0 0 7px; }
.row { width: 823px; height: 69.650px; border-bottom: 1px solid #ccc; display: flex; align-items: flex-start; padding: 9.500px 0 0 4px; }
.drag { width: 15px; height: 14px; margin: 16px 8px 0 0; }
.row .inp { margin: 4px 9px 0 0; }
.a { width: 165px; } .n { width: 164px; } .t { width: 132px; } .row .t { margin-right: 37px; padding-left: 13px; line-height: 39px; }
.tog { width: 38px; height: 23px; margin: 15.500px 133px 0 0; border-radius: 12px; background: #8f0000; padding: 1.500px 3px 1.500px 17px; }
.tog::before { content: ""; display: block; width: 18.500px; height: 20px; border-radius: 50%; background: #fff; }
.rm { width: 45px; height: 42.500px; border-radius: 2px; }
.rm svg { width: 17px; height: 21px; margin-bottom: 1px; }
.sb { width: 21px; background: #f0f0f0; display: flex; flex-direction: column; align-items: center; padding: 9px 0; color: #a3a3a3; }
.sb svg { width: 10px; height: 6px; }
.sb div { width: 17px; background: #c1c1c1; margin-top: 6px; }
.sb .dn { margin-top: auto; color: #505050; }
.sb.off .dn { color: #a3a3a3; }
.sb.off { padding-bottom: 8px; }
.lsb div { height: 226px; }
.tsb div { height: 541px; }
.tsb .dn { margin-bottom: -1px; }
.f5 { margin-top: 11px; padding-left: 129px; }
.add { width: 73px; height: 25px; border-radius: 2px; font-size: 12.500px; gap: 3px; padding-bottom: 1px; }
.f6 { margin-top: 15px; }
.f6 .inp { height: 42px; }
.th { width: 16px; height: 19px; margin: 9px 4px 0 0; color: #555; }
.flip { transform: scaleY(-1); margin-left: 24px; }
.bt { width: 386px; }
.tfoot { flex: 1; background: #f3f3f3; border-top: 1px solid #bbb; padding: 6px 0 0 8px; }
.en { width: 110px; height: 33px; background: #eee; gap: 9px; font-size: 16.250px; color: #666; border-radius: 2px; justify-content: flex-start; padding: 2px 0 0 10px; }
.split { width: 10px; background: #f2f2f2; border: solid #bbb; border-width: 0 1px; padding: 413px 0 0 1px; }

/* sidebar */
.side { width: 393px; display: flex; flex-direction: column; border: 1px solid #bbb; border-width: 1px 1px 0 0; background: #fff; padding-left: 1px; }
.stabs { height: 44px; display: flex; align-items: center; position: relative; border-bottom: 1px solid #bbb; }
.stabs .edge { width: 3px; border: 0; }
.stab { width: 167px; height: 40px; align-self: flex-end; margin-bottom: -1px; background: #fff; border: 1px solid #bbb; border-bottom: 0; display: flex; align-items: center; gap: 15px; padding: 0 0 2px 15px; font-weight: bold; color: #444; margin-right: 4px; }
.stab svg { color: #888; }
.stabs .ib { margin: 1px 0 0 7.600px; }
.stabs .ib.on { margin-left: 8px; }
.scaret { width: 11px; height: 6px; margin-left: 20px; color: #888; }
.ssearch { height: 49px; background: #f3f3f3; border-bottom: 1px solid #ddd; display: flex; justify-content: flex-end; padding: 8px 10px 0 0; }
.sbox { width: 229px; height: 32px; border: 1px solid #ddd; border-radius: 4px; background: #fff; display: flex; align-items: center; padding: 0 7px 1px 9px; gap: 6px; font-size: 15px; color: #aaa; }
.sbox svg { color: #888; margin-bottom: 4px; }
.sbox .sc { width: 9px; height: 6px; margin: 0 0 0 auto; }
.stree { height: 323px; display: flex; border-bottom: 1px solid #ddd; }
.tree { flex: 1; background: #f8f8f8; }
.titems { background: #fff; height: 282px; font-size: 16.250px; }
.ti { display: flex; align-items: center; padding: 0 0 2px 5px; }
.cv { width: 12px; height: 12px; margin-right: 12.500px; color: #555; }
.top { height: 30px; }
.fl { height: 32px; padding-left: 32px; }
.fl .cv { margin-right: 10px; }
.fi { width: 19px; height: 22px; margin: 0 9px 2px 0; color: #888; }
.off .fi { color: #cdcdcd; }
.off span { color: #b5b5b5; font-style: italic; }
.st { width: 12px; height: 12px; margin: 0 16px 0 auto; color: #888; }
.hsplit { height: 8px; background: #f3f3f3; border-bottom: 1px solid #ddd; }
.hsplit div { width: 4px; height: 7px; margin-left: 193px; background: #ccc; }
.nhead { height: 57px; background: #f3f3f3; border-bottom: 1px solid #ddd; display: flex; align-items: center; padding: 0 10px 0 17px; }
.nicon { width: 40px; height: 34px; border: 1px solid #999; border-radius: 4px; background: #a6d3d6; color: #d3edef; display: flex; align-items: center; justify-content: center; }
.ntitle { margin: 0 auto 0 7px; font-weight: bold; color: #444; }
.nb { width: 27px; height: 25px; border: 1px solid #ccc; border-radius: 2px; background: #fff; margin: 0 0 1px 3px; display: flex; align-items: center; justify-content: center; color: #888; }
.nbody { height: 191px; display: flex; }
.ntab { flex: 1; box-shadow: inset 0 -20px 20px -20px rgba(0,0,0,.14); }
.nr { height: 38px; display: flex; border-bottom: 1px solid #ddd; font-size: 17px; }
.nr span { width: 124px; background: #f8f8f8; border-right: 1px solid #ddd; padding: 6px 0 0 7px; color: #444; }
.nr em { padding: 6px 0 0 7px; color: #555; }
.nr .id { color: #b72828; padding: 10px 0 0 10px; font-size: 17.300px; }
.r2 { height: 32px; }
.r2 span, .nr.r2 em { padding-top: 5px; }
.more { display: flex; justify-content: flex-end; align-items: center; gap: 6px; padding: 9px 4px 0 0; font-size: 14px; }
.more svg { width: 9px; height: 5px; }
.tips { height: 187px; border-top: 1px solid #ddd; border-bottom: 1px solid #bbb; }
.tipbtns { display: flex; justify-content: flex-end; gap: 5px; padding: 6px 7px 0 0; }
.tipbtns span { width: 24px; height: 24px; border: 1px solid #ddd; display: flex; align-items: center; justify-content: center; color: #888; }
.tips p { margin: 25px 0 0; padding-right: 10px; text-align: center; font-size: 20px; line-height: 38px; color: #aaa; }
kbd { display: inline-block; height: 35px; padding: 0 5px; border: 1px solid #ccc; border-radius: 4px; background: #f7f7f7; box-shadow: 1px 1px 1px rgba(0,0,0,.15); font: 18.200px/33px "DejaVu Sans Mono", monospace; }
.sfoot { flex: 1; background: #f3f3f3; }

/* taskbar */
.task { height: 50px; flex: none; background: #1f1f1f; display: flex; align-items: stretch; color: #fff; font-family: "Open Sans", sans-serif; }
.start { width: 60px; display: flex; align-items: center; justify-content: center; }
.tsearch { width: 430px; background: #333; border: 1px solid #5d5d5d; display: flex; align-items: center; gap: 14px; padding-left: 14px; font-size: 17.900px; color: #d4d4d4; }
.tsearch span { letter-spacing: -.1px; }
.app { width: 62px; display: flex; align-items: center; justify-content: center; position: relative; }
.app.first { width: 61px; }
.app u { position: absolute; bottom: 0; left: 5px; right: 5px; height: 3px; background: #aaa5a5; }
.chrome { background: #4d4d4d; }
.app.chrome u { left: 0; right: 0; }
.systray { margin-left: auto; display: flex; align-items: center; gap: 11.500px; border-right: 1px solid #777; margin-right: 4px; padding-right: 26px; }
.eng { font-size: 14.700px; margin-left: 1px; }
.clock { width: 78px; text-align: center; font-size: 14.800px; line-height: 23px; letter-spacing: -.3px; margin: 0 11px 0 4px; white-space: nowrap; }
```
